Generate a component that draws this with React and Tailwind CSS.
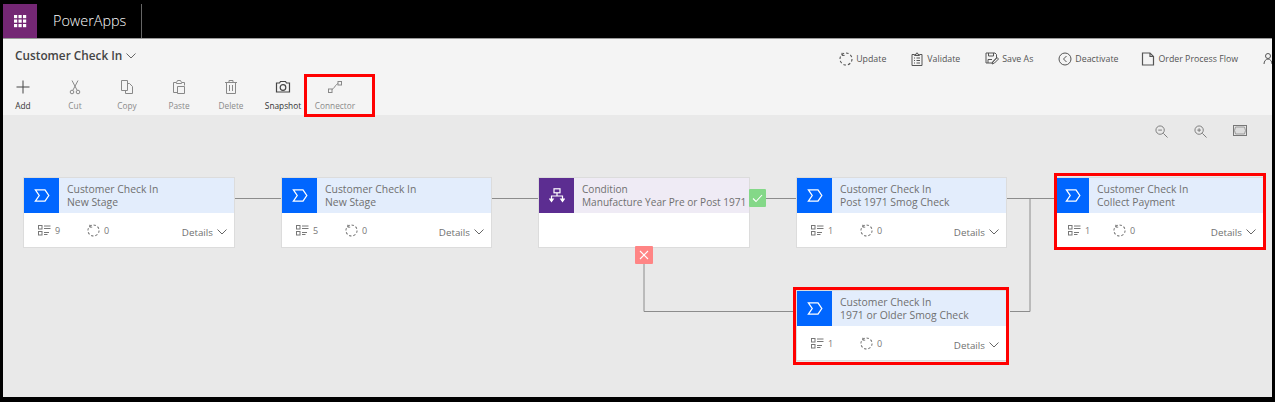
const font = { fontFamily: '"Open Sans", "Noto Sans", sans-serif' };

function Waffle() {
  const cells = [];
  for (let r = 0; r < 3; r++) for (let c = 0; c < 3; c++) cells.push(<rect key={`${r}${c}`} x={c * 4.5} y={r * 4.5} width="3.2" height="3.2" fill="#fff" />);
  return <svg width="13" height="13" viewBox="0 0 13 13">{cells}</svg>;
}

function Chevron({ w = 10, h = 6, color = '#666' }) {
  return <svg width={w} height={h} viewBox="0 0 10 6" fill="none"><path d="M.5.5 5 5 9.5.5" stroke={color} strokeWidth="1" /></svg>;
}

function Spin({ size = 13, color = '#666' }) {
  return (
    <svg width={size} height={size} viewBox="0 0 14 14" fill="none">
      <circle cx="7" cy="7" r="6" stroke={color} strokeWidth="1.1" strokeDasharray="2.6 2" />
      <path d="M3 .8v2.6h2.6" stroke={color} strokeWidth="1" />
    </svg>
  );
}

function ToolIcon({ name, color }) {
  const p = { stroke: color, strokeWidth: 1, fill: 'none' };
  return (
    <svg width="16" height="16" viewBox="0 0 16 16">
      {name === 'add' && <path d="M8 1.5v13M1.5 8h13" {...p} />}
      {name === 'cut' && <g {...p}><path d="M5 1.5 10 11M11 1.5 6 11" /><circle cx="5" cy="13" r="1.8" /><circle cx="11" cy="13" r="1.8" /></g>}
      {name === 'copy' && <g {...p}><path d="M2.5 1.5h6v10h-6z" /><path d="M8.5 4.5h2l3 3v7h-7v-3" /></g>}
      {name === 'paste' && <g {...p}><path d="M5 3.5H2.5v10h4M11 3.5h2.5v3" /><path d="M5.5 3.5l1-2h3l1 2v1h-5z" /><path d="M6.5 7.5h7v7h-7z" /></g>}
      {name === 'delete' && <g {...p}><path d="M2 3.5h12M6 3.5v-2h4v2M3.5 3.5v11h9v-11" /><path d="M6.5 6v6M9.5 6v6" /></g>}
      {name === 'snapshot' && <g stroke={color} strokeWidth="1.2" fill="none"><path d="M1.500 4h3l1-1.500h5l1 1.500h3v9h-13z" /><circle cx="8" cy="8.500" r="2.800" /></g>}
      {name === 'connector' && <g {...p}><rect x="1.5" y="10" width="3.5" height="3.5" /><rect x="11" y="2.5" width="3.5" height="3.5" /><path d="M5 10.5C7 9.5 8 7 9.5 5.5L11 4.5" /></g>}
    </svg>
  );
}

function Tool({ icon, label, active }) {
  const color = active ? '#333' : '#8a8a8a';
  return (
    <div className="flex w-10 flex-col items-center gap-[5px]">
      <ToolIcon name={icon} color={active ? '#444' : '#888'} />
      <span className="text-[8.300px] leading-[12px] whitespace-nowrap" style={{ color }}>{label}</span>
    </div>
  );
}

function ActionIcon({ name }) {
  const p = { stroke: '#555', strokeWidth: 1, fill: 'none' };
  return (
    <svg width="14" height="14" viewBox="0 0 14 14">
      {name === 'update' && <g><circle cx="7" cy="7" r="6" stroke="#555" strokeWidth="1.1" strokeDasharray="2.6 2" fill="none" /><path d="M3 .8v2.6h2.6" {...p} /></g>}
      {name === 'validate' && <g {...p}><path d="M4 2.5H2v11h10v-11h-2" /><path d="M4.5 3.5v-1h1.5l.5-1.5h1l.5 1.5h1.500v1z" /><path d="M4 6h1M4 8.5h1M4 11h1M6.5 6h3.5M6.5 8.5h3.5M6.5 11h3.5" /></g>}
      {name === 'saveas' && <g {...p}><path d="M1 1h9l1.5 1.5V6L7 11H1z" /><path d="M3.5 1v3h5V1M3 11V7.500h4" /><path d="M7 12l1-2.500 4-4 1.500 1.500-4 4z" /></g>}
      {name === 'deactivate' && <g {...p}><circle cx="7" cy="7" r="6" /><path d="M8.500 4 5.500 7l3 3" /></g>}
      {name === 'order' && <g {...p} strokeWidth="1.2"><path d="M1.500 1h7.500l3.500 3.500v8.500h-11z" /><path d="M9 1v3.500h3.500" /></g>}
    </svg>
  );
}

function Action({ icon, label, ml }) {
  return (
    <div className={`flex items-center gap-[3px] ${ml}`}>
      <ActionIcon name={icon} />
      <span className="mt-[1px] text-[8.800px] leading-none whitespace-nowrap text-[#555]">{label}</span>
    </div>
  );
}

function Stage() {
  return (
    <svg width="16" height="13" viewBox="0 0 16 13" fill="none">
      <path d="M1.400.8h9.600l3.800 5.700-3.800 5.700H1.400l3.800-5.700z" stroke="#fff" strokeWidth="1.300" />
    </svg>
  );
}

function ListIcon() {
  return (
    <svg width="13" height="11" viewBox="0 0 13 11" fill="none" stroke="#777">
      <rect x=".5" y=".5" width="3.500" height="3.500" />
      <rect x=".5" y="6.500" width="3.500" height="3.500" />
      <path d="M6 1h6.500M6 3.500h6.500M6 7.500h5M6 9.500h3.500" strokeWidth="1" />
    </svg>
  );
}

function Card({ className, title = 'Customer Check In', sub, steps, compact }) {
  return (
    <div className={`absolute h-[69px] bg-white shadow-[0_0_0_1px_#dcdcdc] ${className}`}>
      <div className="flex h-[35px] bg-[#e3edfc]">
        <div className={`flex h-full shrink-0 items-center justify-center bg-[#0066ff] ${compact ? 'w-8' : 'w-[35px]'}`}><Stage /></div>
        <div className="pl-[8px] pt-[5px] text-[10.400px] leading-[13px] whitespace-nowrap text-[#707070]">
          <div>{title}</div>
          <div>{sub}</div>
        </div>
      </div>
      <div className={`flex h-[34px] items-center pr-[7px] pt-[1px] ${compact ? 'pl-[11px]' : 'pl-[14px]'}`}>
        <ListIcon />
        <span className="ml-1 w-[8px] text-[9px] text-[#777]">{steps}</span>
        <span className={compact ? 'ml-[20px]' : 'ml-6'}><Spin size={13} color="#777" /></span>
        <span className="ml-1 text-[9px] text-[#777]">0</span>
        <div className="ml-auto flex items-center gap-1 pt-[4px]">
          <span className="text-[9.800px] leading-none text-[#707070]">Details</span>
          <Chevron />
        </div>
      </div>
    </div>
  );
}

function Connectors() {
  return (
    <svg className="absolute left-0 top-0" width="1269" height="282" fill="none" stroke="#8c8c8c" strokeWidth="1">
      <path d="M232 83.500h46M489 83.500h46M760 83.500h33M1004 83.500h48M1027 83.500v113h-20M641 149v47.500h152" />
    </svg>
  );
}

function RedBox({ className }) {
  return <div className={`absolute border-[3px] border-[#ff0000] ${className}`} />;
}

export default function App() {
  return (
    <div className="flex h-[402px] w-[1275px] flex-col overflow-hidden bg-black pb-[5px] pl-[3px] pr-[3px]" style={font}>
      <header className="flex h-[38px] shrink-0 items-end">
        <div className="flex h-[34px] w-[34px] items-center justify-center bg-[#742774]"><Waffle /></div>
        <div className="flex h-[34px] w-[105px] items-center border-r border-[#666] pl-4 text-[14.400px] font-light text-white">PowerApps</div>
      </header>

      <section className="relative flex h-[77px] shrink-0 flex-col overflow-hidden border-t border-[#999] bg-[#f4f4f4]">
        <div className="flex h-[33px] items-center justify-between">
          <div className="flex items-center gap-1 pl-3">
            <span className="text-[11.800px] font-semibold text-[#444]">Customer Check In</span>
            <Chevron />
          </div>
          <div className="flex translate-y-[3px] items-center pr-0">
            <Action icon="update" label="Update" />
            <Action icon="validate" label="Validate" ml="ml-[24px]" />
            <Action icon="saveas" label="Save As" ml="ml-[25px]" />
            <Action icon="deactivate" label="Deactivate" ml="ml-[25px]" />
            <Action icon="order" label="Order Process Flow" ml="ml-[23px]" />
            <div className="ml-[25px] w-[9px] overflow-hidden"><svg width="14" height="14" viewBox="0 0 14 14" fill="none" stroke="#555"><circle cx="5" cy="4" r="2.500" /><path d="M1 12c0-3 2-5 4-5s4 2 4 5" /></svg></div>
          </div>
        </div>
        <div className="flex gap-3 pt-[7px]">
          <Tool icon="add" label="Add" active />
          <Tool icon="cut" label="Cut" />
          <Tool icon="copy" label="Copy" />
          <Tool icon="paste" label="Paste" />
          <Tool icon="delete" label="Delete" />
          <Tool icon="snapshot" label="Snapshot" active />
          <Tool icon="connector" label="Connector" />
        </div>
      </section>

      <main className="relative flex-1 overflow-visible bg-[#e9e9e9]">
        <div className="flex justify-end gap-[26px] pr-[25px] pt-[10px]">
          <svg width="13" height="13" viewBox="0 0 14 14" fill="none" stroke="#777"><circle cx="5.500" cy="5.500" r="4.500" /><path d="M9 9l4.500 4.500M3.500 5.500h4" /></svg>
          <svg width="13" height="13" viewBox="0 0 14 14" fill="none" stroke="#777"><circle cx="5.500" cy="5.500" r="4.500" /><path d="M9 9l4.500 4.500M3.500 5.500h4M5.500 3.500v4" /></svg>
          <svg width="14" height="11" viewBox="0 0 14 11" fill="none" stroke="#777"><rect x=".5" y=".5" width="13" height="10" /><path d="M2.500 2h9l1 3.500-1 3.500h-9l-1-3.500z" fill="#ddd" stroke="#999" /></svg>
        </div>
        <Connectors />
        <Card className="left-[21px] top-[63px] w-[210px]" sub="New Stage" steps="9" />
        <Card className="left-[279px] top-[63px] w-[209px]" sub="New Stage" steps="5" />
        <div className="absolute left-[536px] top-[63px] h-[69px] w-[210px] bg-white shadow-[0_0_0_1px_#dcdcdc]">
          <div className="flex h-[35px] bg-[#efebf5]">
            <div className="flex h-full w-[35px] shrink-0 items-center justify-center bg-[#5c2d91]">
              <svg width="16" height="15" viewBox="0 0 16 15" fill="none" stroke="#fff" strokeWidth="1.200"><rect x="5" y=".8" width="6" height="4" /><path d="M8 5v3M2.500 12V8h11v4" /><path d="M.8 11h3.400l-1.700 2.500zM11.800 11h3.400l-1.700 2.500z" fill="#fff" /></svg>
            </div>
            <div className="pl-[8px] pt-[5px] text-[10.100px] leading-[13px] whitespace-nowrap text-[#707070]">
              <div>Condition</div>
              <div>Manufacture Year Pre or Post 1971</div>
            </div>
          </div>
        </div>
        <div className="absolute left-[746px] top-[74px] flex h-[18px] w-[17px] items-center justify-center rounded-[1px] bg-[#84d888]">
          <svg width="11" height="9" viewBox="0 0 11 9" fill="none" stroke="#fff" strokeWidth="1.100"><path d="M1 4.500 4 7.500 10 1" /></svg>
        </div>
        <div className="absolute left-[632px] top-[131px] flex h-[18px] w-[18px] items-center justify-center rounded-[1px] bg-[#ff8585]">
          <svg width="10" height="10" viewBox="0 0 10 10" fill="none" stroke="#fff" strokeWidth="1.100"><path d="M1 1l8 8M9 1 1 9" /></svg>
        </div>
        <Card className="left-[794px] top-[63px] w-[209px]" sub="Post 1971 Smog Check" steps="1" />
        <Card className="left-[1054px] top-[63px] w-[206px]" sub="Collect Payment" steps="1" compact />
        <Card className="left-[794px] top-[176px] w-[209px]" sub="1971 or Older Smog Check" steps="1" />
        <RedBox className="left-[1051px] top-[58px] h-[77px] w-[212px]" />
        <RedBox className="left-[790px] top-[172px] h-[78px] w-[216px]" />
        <RedBox className="left-[301px] -top-[41px] h-[43px] w-[71px]" />
      </main>
    </div>
  );
}
